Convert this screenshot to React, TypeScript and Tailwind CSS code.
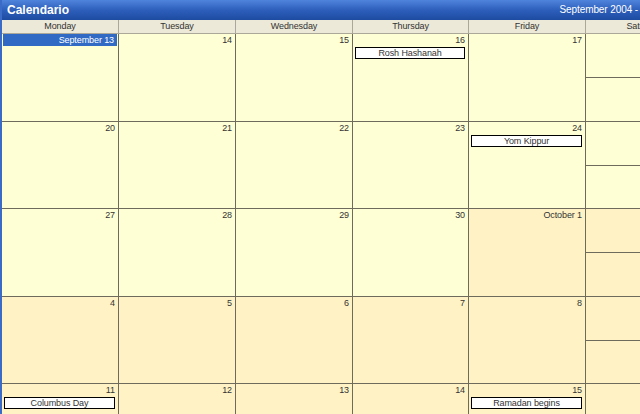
import React from "react";

type Cell = { label: string; oct: boolean; selected?: boolean; event?: string };

const weeks: { days: Cell[]; satOct: boolean; sunOct: boolean; h: string }[] = [
  {
    h: "h-[88px]",
    satOct: false,
    sunOct: false,
    days: [
      { label: "September 13", oct: false, selected: true },
      { label: "14", oct: false },
      { label: "15", oct: false },
      { label: "16", oct: false, event: "Rosh Hashanah" },
      { label: "17", oct: false },
    ],
  },
  {
    h: "h-[87px]",
    satOct: false,
    sunOct: false,
    days: [
      { label: "20", oct: false },
      { label: "21", oct: false },
      { label: "22", oct: false },
      { label: "23", oct: false },
      { label: "24", oct: false, event: "Yom Kippur" },
    ],
  },
  {
    h: "h-[88px]",
    satOct: true,
    sunOct: true,
    days: [
      { label: "27", oct: false },
      { label: "28", oct: false },
      { label: "29", oct: false },
      { label: "30", oct: false },
      { label: "October 1", oct: true },
    ],
  },
  {
    h: "h-[87px]",
    satOct: true,
    sunOct: true,
    days: [
      { label: "4", oct: true },
      { label: "5", oct: true },
      { label: "6", oct: true },
      { label: "7", oct: true },
      { label: "8", oct: true },
    ],
  },
  {
    h: "h-[88px]",
    satOct: true,
    sunOct: true,
    days: [
      { label: "11", oct: true, event: "Columbus Day" },
      { label: "12", oct: true },
      { label: "13", oct: true },
      { label: "14", oct: true },
      { label: "15", oct: true, event: "Ramadan begins" },
    ],
  },
];

const widths = ["w-[117px]", "w-[117px]", "w-[117px]", "w-[116px]", "w-[117px]", "w-[117px]"];
const headers = ["Monday", "Tuesday", "Wednesday", "Thursday", "Friday", "Saturday"];

function DayCell({ c, w }: { c: Cell; w: string }) {
  return (
    <div
      className={`${w} shrink-0 h-full border-r border-b border-[#6e6b5c] flex flex-col ${
        c.oct ? "bg-[#fff3c6]" : "bg-[#ffffd6]"
      }`}
    >
      {c.selected ? (
        <div className="h-[12px] mx-[1px] bg-[#316ac5] text-white text-right pr-[3px] leading-[12px]">
          {c.label}
        </div>
      ) : (
        <div className="h-[12px] text-right pr-[3px] leading-[13px] text-[#333]">{c.label}</div>
      )}
      {c.event && (
        <div className="mt-[1px] ml-[2px] mr-[3px] h-[12px] bg-white border border-black text-center leading-[10px] text-[#333]">
          {c.event}
        </div>
      )}
    </div>
  );
}

export default function App() {
  return (
    <div
      className="w-[640px] h-[414px] overflow-hidden bg-[#ffffd6] border-l-2 border-[#3a6bc6] text-[9px] tracking-[-0.1px]"
      style={{ fontFamily: '"Liberation Sans", Arial, sans-serif' }}
    >
      <div className="h-[20px] w-full flex items-center justify-between bg-gradient-to-b from-[#4f84dc] via-[#2d5fbb] to-[#1d4ba1] text-white">
        <span className="pl-[5px] text-[12px] font-bold leading-none tracking-normal">Calendario</span>
        <span className="text-[10px] leading-none whitespace-nowrap pr-[2px]">September 2004 -</span>
      </div>
      <div className="w-[720px]">
        <div className="flex h-[14px] bg-[#ece9d8] border-b border-[#aca899]">
          {headers.map((h, i) => (
            <div
              key={h}
              className={`${widths[i]} shrink-0 border-r border-[#aca899] text-center leading-[13px] text-[#333] whitespace-nowrap`}
            >
              {h}
            </div>
          ))}
        </div>
        {weeks.map((wk, wi) => (
          <div key={wi} className={`flex ${wk.h}`}>
            {wk.days.map((c, i) => (
              <DayCell key={i} c={c} w={widths[i]} />
            ))}
            <div className="w-[117px] shrink-0 h-full border-r border-b border-[#6e6b5c] flex flex-col">
              <div className={`flex-1 border-b border-[#6e6b5c] ${wk.satOct ? "bg-[#fff3c6]" : "bg-[#ffffd6]"}`} />
              <div className={`flex-1 ${wk.sunOct ? "bg-[#fff3c6]" : "bg-[#ffffd6]"}`} />
            </div>
          </div>
        ))}
      </div>
    </div>
  );
}
